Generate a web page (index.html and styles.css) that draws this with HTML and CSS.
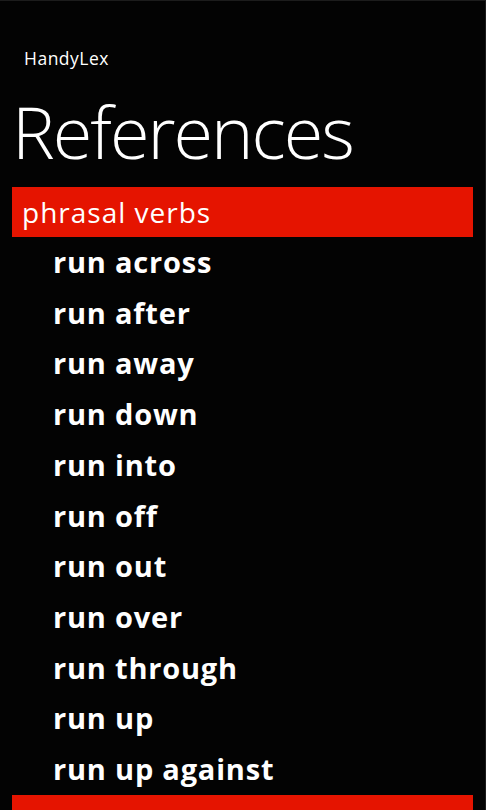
FILE: index.html
```html
<!DOCTYPE html>
<html lang="en">

<head>
    <meta charset="UTF-8">
    <meta name="viewport" content="width=device-width, initial-scale=1.0">
    <title>HandyLex - References</title>
    <link rel="stylesheet" href="styles.css">
</head>

<body>
    <div class="app">
        <div class="app-name">HandyLex</div>
        <h1 class="page-title">References</h1>

        <div class="group">
            <div class="group-header">phrasal verbs</div>
            <ul class="items">
                <li>run across</li>
                <li>run after</li>
                <li>run away</li>
                <li>run down</li>
                <li>run into</li>
                <li>run off</li>
                <li>run out</li>
                <li>run over</li>
                <li>run through</li>
                <li>run up</li>
                <li>run up against</li>
            </ul>
        </div>

        <div class="group">
            <div class="group-header">prefixes</div>
        </div>
    </div>
</body>

</html>
```

FILE: styles.css
```css
html, body {
    margin: 0;
    height: 100%;
    overflow: hidden;
}

body {
    font-family: 'Open Sans', 'Noto Sans', sans-serif;
    background-color: #030303;
    color: #fff;
}

.app {
    height: 100%;
    border-top: 1px solid #1c1c1c;
    border-right: 1px solid #1c1c1c;
    box-sizing: border-box;
}

.app-name {
    padding: 47px 0 0 24px;
    font-size: 17.5px;
    letter-spacing: 0.5px;
    line-height: 20px;
}

.page-title {
    margin: 23px 0 16px 12px;
    font-size: 72px;
    font-weight: 300;
    letter-spacing: -2px;
    line-height: 80px;
}

.group-header {
    margin: 0 12px;
    padding-left: 10px;
    background-color: #e51400;
    font-size: 28px;
    letter-spacing: 1px;
    line-height: 50px;
}

.items {
    list-style: none;
    margin: 0;
    padding: 0 0 0 53px;
}

.items li {
    font-size: 29px;
    font-weight: 700;
    letter-spacing: 0.8px;
    line-height: 50.7px;
}
```
